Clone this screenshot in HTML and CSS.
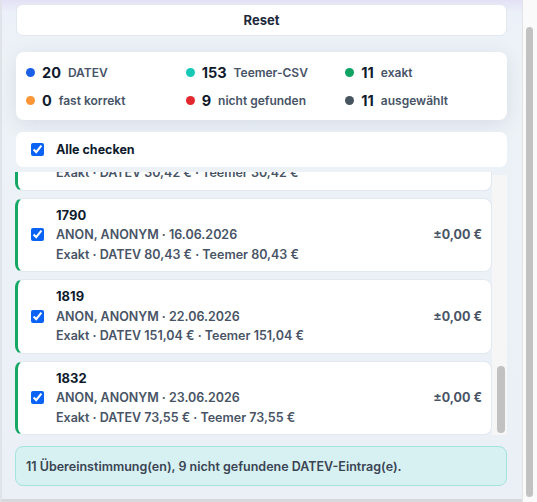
FILE: index.html
```html
<!DOCTYPE html>
<html lang="de">
<head>
    <meta charset="UTF-8">
    <meta name="viewport" content="width=device-width, initial-scale=1.0">
    <title>DATEV-Abgleich</title>
    <link rel="stylesheet" href="styles.css">
</head>
<body>
    <div class="page">
        <button class="reset-btn" type="button">Reset</button>

        <div class="stats">
            <div class="stat"><span class="dot dot-blue"></span><b>20</b><span>DATEV</span></div>
            <div class="stat"><span class="dot dot-teal"></span><b>153</b><span>Teemer-CSV</span></div>
            <div class="stat"><span class="dot dot-green"></span><b>11</b><span>exakt</span></div>
            <div class="stat"><span class="dot dot-orange"></span><b>0</b><span>fast korrekt</span></div>
            <div class="stat"><span class="dot dot-red"></span><b>9</b><span>nicht gefunden</span></div>
            <div class="stat"><span class="dot dot-slate"></span><b>11</b><span>ausgewählt</span></div>
        </div>

        <label class="check-all">
            <input type="checkbox" id="checkAll" checked>
            <span>Alle checken</span>
        </label>

        <div class="list-wrap">
            <div class="match-list" id="matchList">
                <!-- filled by script -->
            </div>
            <div class="list-scrollbar"><div class="list-thumb"></div></div>
        </div>

        <div class="summary">11 Übereinstimmung(en), 9 nicht gefundene DATEV-Eintrag(e).</div>
    </div>
    <div class="page-scrollbar"><div class="page-thumb"></div></div>

    <script>
        // only the tail of the list is in view
        var matches = [
            { id: '1781', date: '15.06.2026', amount: '30,42' },
            { id: '1790', date: '16.06.2026', amount: '80,43' },
            { id: '1819', date: '22.06.2026', amount: '151,04' },
            { id: '1832', date: '23.06.2026', amount: '73,55' }
        ];

        var list = document.getElementById('matchList');
        var html = '';
        for (var i = 0; i < matches.length; i++) {
            var m = matches[i];
            html += '<label class="match">' +
                '<input type="checkbox" checked>' +
                '<div class="match-body">' +
                    '<div class="match-id">' + m.id + '</div>' +
                    '<div class="match-line">ANON, ANONYM · ' + m.date + '</div>' +
                    '<div class="match-line">Exakt · DATEV ' + m.amount + ' € · Teemer ' + m.amount + ' €</div>' +
                '</div>' +
                '<div class="match-diff">±0,00 €</div>' +
            '</label>';
        }
        list.innerHTML = html;

        document.getElementById('checkAll').addEventListener('change', function () {
            var boxes = list.querySelectorAll('input[type=checkbox]');
            for (var j = 0; j < boxes.length; j++) {
                boxes[j].checked = this.checked;
            }
        });
    </script>
</body>
</html>
```

FILE: styles.css
```css
html, body {
    height: 100%;
}

body {
    margin: 0;
    display: flex;
    overflow: hidden;
    font-family: Inter, "Noto Sans", sans-serif;
    color: #0f1b2d;
    background: #ebf1f6;
}

.page {
    flex: 1;
    display: flex;
    flex-direction: column;
    height: 502px;
    box-sizing: border-box;
    padding: 4px 15px 13px 14px;
    border-left: 2px solid #e0e4ea;
    border-bottom: 3px solid #d6d8dc;
    background: linear-gradient(#e3e1f6 0, #ecf0f8 12px, #edf2f7 60px, #eaf0f6 100%);
}

.page-scrollbar {
    width: 15px;
    height: 502px;
    box-sizing: border-box;
    padding: 27px 4px 5px 3px;
    background: #fafafa;
    border-left: 1px solid #e3e3e3;
}

.page-thumb {
    height: 100%;
    background: #c2c2c2;
    border-radius: 4px;
}

.reset-btn {
    flex: none;
    height: 32px;
    background: #fff;
    border: 1px solid #e3e8ef;
    border-radius: 7px;
    font-family: inherit;
    font-size: 13px;
    font-weight: 700;
    color: #1e293b;
    margin-bottom: 16px;
}

.stats {
    flex: none;
    display: grid;
    grid-template-columns: repeat(3, 1fr);
    row-gap: 8px;
    height: 68px;
    box-sizing: border-box;
    padding: 10px 2px 10px 10px;
    background: #fff;
    border-radius: 8px;
    box-shadow: 0 4px 20px rgba(30, 50, 80, 0.1);
    margin-bottom: 12px;
}

.stat {
    display: flex;
    align-items: center;
    gap: 7px;
    height: 20px;
    white-space: nowrap;
}

.stat b {
    font-size: 14.5px;
    font-weight: 700;
    color: #0f1b2d;
}

.stat span:last-child {
    font-size: 12px;
    font-weight: 600;
    color: #475467;
}

.dot {
    width: 9px;
    height: 9px;
    border-radius: 50%;
}

.dot-blue { background: #1a5fe6; }
.dot-teal { background: #16c8b6; }
.dot-green { background: #0fa364; }
.dot-orange { background: #fd9636; }
.dot-red { background: #e2272d; }
.dot-slate { background: #475561; }

.check-all {
    flex: none;
    display: flex;
    align-items: center;
    gap: 12px;
    height: 35px;
    padding: 0 15px;
    background: #fff;
    border-radius: 7px;
    font-size: 12.5px;
    font-weight: 700;
    color: #0f1b2d;
    margin-bottom: 5px;
}

input[type=checkbox] {
    flex: none;
    width: 13px;
    height: 13px;
    margin: 0;
    accent-color: #0b63f6;
}

.list-wrap {
    flex: none;
    display: flex;
    height: 263px;
    margin-left: -1px;
    margin-bottom: 11px;
}

.match-list {
    flex: 1;
    display: flex;
    flex-direction: column;
    justify-content: flex-end;
    gap: 7px;
    overflow: hidden;
}

.list-scrollbar {
    width: 15px;
    box-sizing: border-box;
    padding: 191px 2px 2px 5px;
    margin-top: 3px;
    background: #f6f6f6;
}

.list-thumb {
    height: 100%;
    background: #c1c1c1;
    border-radius: 4px;
}

.match {
    flex: none;
    display: flex;
    align-items: center;
    gap: 12px;
    padding: 7px 9px 7px 13px;
    background: #fff;
    border: 1px solid #e2e8f0;
    border-left: 3px solid #17a765;
    border-radius: 8px;
}

.match-body {
    flex: 1;
    font-size: 12.5px;
    line-height: 19.5px;
    font-weight: 600;
    color: #485466;
}

.match-id {
    font-size: 13px;
    font-weight: 700;
    color: #0f1b2d;
}

.match-diff {
    font-size: 12.5px;
    font-weight: 700;
    color: #485466;
}

.summary {
    flex: none;
    height: 40px;
    box-sizing: border-box;
    padding: 0 10px;
    display: flex;
    align-items: center;
    background: #d7f0f2;
    border: 1px solid #a3e4dc;
    border-radius: 8px;
    font-size: 12.5px;
    font-weight: 600;
    color: #3a4453;
    margin-left: -1px;
}
```
